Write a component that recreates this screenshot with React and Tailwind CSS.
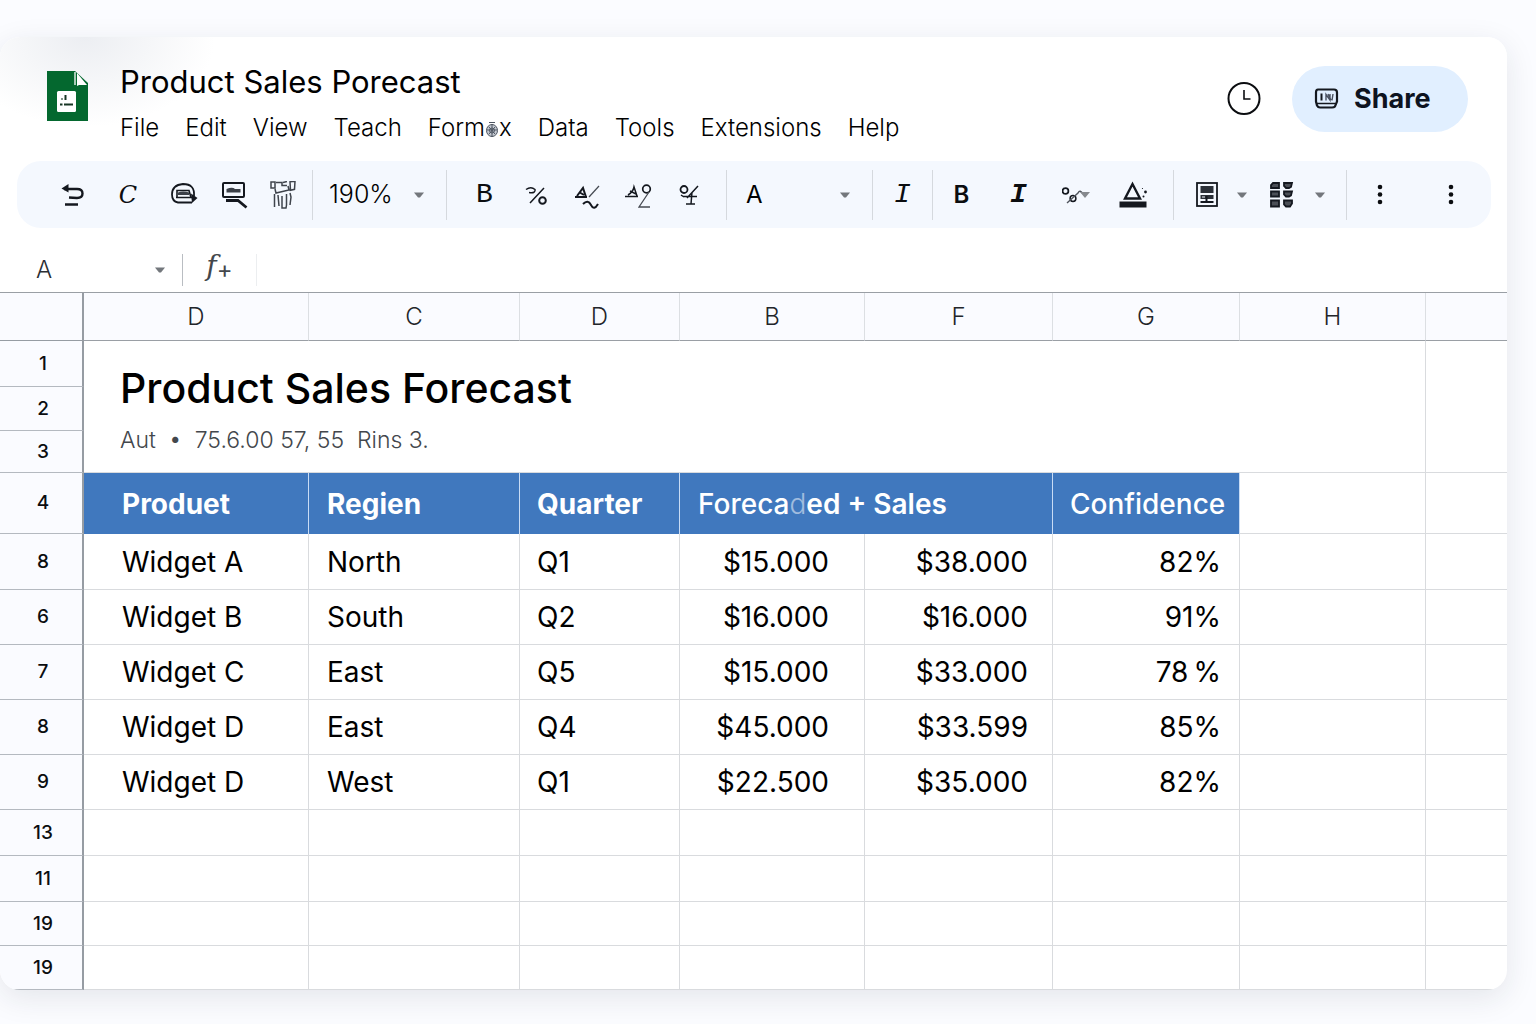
import { useState } from 'react';

const menuItems = ['File', 'Edit', 'View', 'Teach', 'Formex', 'Data', 'Tools', 'Extensions', 'Help'];

const columns = ['D', 'C', 'D', 'B', 'F', 'G', 'H'];

const forecastRows = [
  { no: '8', height: 'h-14', product: 'Widget A', region: 'North', quarter: 'Q1', forecast: '$15.000', sales: '$38.000', confidence: '82%' },
  { no: '6', height: 'h-[55px]', product: 'Widget B', region: 'South', quarter: 'Q2', forecast: '$16.000', sales: '$16.000', confidence: '91%' },
  { no: '7', height: 'h-[55px]', product: 'Widget C', region: 'East', quarter: 'Q5', forecast: '$15.000', sales: '$33.000', confidence: '78\u2009%' },
  { no: '8', height: 'h-[55px]', product: 'Widget D', region: 'East', quarter: 'Q4', forecast: '$45.000', sales: '$33.599', confidence: '85%' },
  { no: '9', height: 'h-[55px]', product: 'Widget D', region: 'West', quarter: 'Q1', forecast: '$22.500', sales: '$35.000', confidence: '82%' },
];

const emptyRows = [
  { no: '13', height: 'h-[46px]' },
  { no: '11', height: 'h-[46px]' },
  { no: '19', height: 'h-11' },
  { no: '19', height: 'h-11' },
];

function Icon({ children }) {
  return (
    <svg
      width="28"
      height="28"
      viewBox="0 0 28 28"
      fill="none"
      stroke="#14181f"
      strokeWidth="2"
      className="shrink-0"
      aria-hidden="true"
    >
      {children}
    </svg>
  );
}

function Caret({ className = '' }) {
  return (
    <svg width="12" height="6" viewBox="0 0 12 6" className={className} aria-hidden="true">
      <path d="M1 0.5h10L7 5.5H5z" fill="#73777c" />
    </svg>
  );
}

function Divider() {
  return <div className="h-[50px] w-px shrink-0 bg-[#d5d9de]" />;
}

function ToolButton({ label, width, children }) {
  return (
    <button
      type="button"
      aria-label={label}
      className={`flex h-12 shrink-0 items-center justify-center text-[#0b0d10] ${width}`}
    >
      {children}
    </button>
  );
}

function ToolSelect({ label, value, width, padding, caret }) {
  return (
    <div className={`relative flex shrink-0 items-center ${width}`}>
      <select
        aria-label={label}
        defaultValue={value}
        className={`w-full appearance-none bg-transparent outline-none ${padding}`}
      >
        <option>{value}</option>
      </select>
      <Caret className={`pointer-events-none absolute ${caret}`} />
    </div>
  );
}

function Logo() {
  return (
    <svg width="42" height="50" viewBox="0 0 42 50" className="shrink-0" aria-hidden="true">
      <path d="M0 0h28l13 12v38H0z" fill="#04682f" />
      <path d="M30 2l10 12h-8l-2 1z" fill="#fff" />
      <path d="M28 1v13" stroke="#fff" strokeWidth="1.3" />
      <rect x="10" y="20" width="19" height="21" rx="1.5" fill="#fff" />
      <path d="M18.500 24v5M17 33.500h9M13 33.500h2.500" stroke="#173524" strokeWidth="2" />
      <circle cx="15" cy="28" r="1" fill="#56705f" />
    </svg>
  );
}

function Smudge() {
  return (
    <svg width="14" height="18" viewBox="0 0 14 18" className="inline-block align-[-3px]" aria-hidden="true">
      <g fill="none" stroke="#4d5561" strokeWidth="1">
        <ellipse cx="7" cy="9.500" rx="5.500" ry="6" fill="#c5cad2" />
        <path d="M4 1.500h6M7 3v13M2 9h10M4 6l6 7M10 6l-6 7" />
        <circle cx="7" cy="9.500" r="2.500" />
      </g>
    </svg>
  );
}

function Header() {
  return (
    <header className="flex items-start bg-[radial-gradient(ellipse_130px_90px_at_85px_0px,#eceef2,#ffffff)] pt-6 pr-[39px] pl-[47px]">
      <div className="pt-2.5">
        <Logo />
      </div>
      <div className="ml-[31px]">
        <h1 className="pt-px text-[31px] leading-10 text-black">Product Sales Porecast</h1>
        <nav className="mt-2 flex gap-[26px] text-2xl leading-9 font-light text-black">
          {menuItems.map((item) => (
            <button key={item} type="button" className="whitespace-nowrap" aria-label={item}>
              {item === 'Formex' ? (
                <>
                  Form
                  <Smudge />x
                </>
              ) : (
                item
              )}
            </button>
          ))}
        </nav>
      </div>
      <div className="ml-auto flex items-center gap-[30px] pt-[5px]">
        <button type="button" aria-label="Version history">
          <svg width="36" height="36" viewBox="0 0 36 36" fill="none" stroke="#0b0d10" strokeWidth="2" aria-hidden="true">
            <circle cx="18" cy="17.500" r="15.500" />
            <path d="M18 9v9h6.500" strokeWidth="1.600" />
          </svg>
        </button>
        <button
          type="button"
          className="flex h-[66px] w-44 items-center gap-3.5 rounded-full bg-[#e1efff] pl-5 text-[27px] font-bold text-[#0d1320]"
        >
          <Icon>
            <path d="M6 4.500h16q3 0 3 3v9l-2 5q-1 1-3 1H8q-2 0-3-2l-1-4v-9q0-3 2-3z" strokeWidth="2.200" />
            <path d="M5 18.500h18" strokeWidth="1.600" />
            <path d="M9.500 8.500v7" />
            <path d="M14 15.500v-6l4 5.500v-6M21 9l-1 6.500M16 9l3 6" strokeWidth="1.400" stroke="#4a5160" />
          </Icon>
          Share
        </button>
      </div>
    </header>
  );
}

function Toolbar() {
  return (
    <div className="mr-4 ml-[17px] flex h-[67px] items-center rounded-3xl bg-[#f4f8fe] pl-[27px]">
      <ToolButton label="Undo" width="w-14">
        <Icon>
          <path d="M6 8h13q5.500 0 5.500 4.500T19 17l-8-.5" strokeWidth="2.400" />
          <path d="M3.500 7.500l7-4.500v8.500z" fill="#14181f" stroke="none" />
          <path d="M7 23.500h13" strokeWidth="2.400" />
        </Icon>
      </ToolButton>
      <ToolButton label="Redo" width="w-14">
        <span className="font-['DejaVu_Serif',serif] text-2xl italic">C</span>
      </ToolButton>
      <ToolButton label="Print" width="w-14">
        <Icon>
          <path d="M24 15q1-12-11-12Q2 4 2 13.500q0 7 6 8h14" strokeWidth="1.800" />
          <path d="M7 16.500V9.500h12l2 7M6 16.500h17" strokeWidth="1.600" />
          <path d="M8 11.500q5-2 11 0v2.500H8z" fill="#3b4048" stroke="none" />
          <path d="M21 12.500l6.500 4.500L22 22z" fill="#14181f" stroke="none" />
        </Icon>
      </ToolButton>
      <ToolButton label="Find" width="w-[46px]">
        <Icon>
          <rect x="2" y="2" width="21" height="14" rx="1" />
          <path d="M5.500 8q6-2.500 8.500 0h5.500v3.500h-14z" fill="#3b4048" stroke="none" />
          <path d="M5 19.500h12l8.500 7" strokeWidth="2.800" />
        </Icon>
      </ToolButton>
      <ToolButton label="Paint format" width="w-[50px]">
        <Icon>
          <g stroke="#3f444c" strokeWidth="1.500">
            <path d="M2 1h4v6H2zM7 1.500h6v3h5M6 8l1 4 13-3-1-4M21 0.800l5-.5-.5 8-4 1zM14 1.500l4-1" />
            <path d="M5.500 13v13M9 14l1 11M13 15v12h4l.5-3V13M21 12l1 4-1 8" />
          </g>
        </Icon>
      </ToolButton>
      <div className="ml-1">
        <Divider />
      </div>
      <ToolSelect label="Zoom" value="190%" width="w-[133px]" padding="pl-4 text-[25px] font-light text-black" caret="right-[21px]" />
      <Divider />
      <div className="flex px-3">
        <ToolButton label="Currency format" width="w-[51px]">
          <span className="font-['Liberation_Mono',monospace] text-[28px]">B</span>
        </ToolButton>
        <ToolButton label="Percent format" width="w-[51px]">
          <Icon>
            <path d="M4 8.500q5-3.500 9 0 1 4-6 3M22 7L8 22" strokeWidth="1.500" />
            <circle cx="20.500" cy="19.500" r="3.300" strokeWidth="2" />
          </Icon>
        </ToolButton>
        <ToolButton label="Decrease decimals" width="w-[51px]">
          <Icon>
            <path d="M2 16h12M4 15l6-8 3 9M6 11l5 3" strokeWidth="2" />
            <path d="M26 5L16 16" strokeWidth="1.200" stroke="#454a52" />
            <path d="M10 23q5-5 8 1 3 6 7-1" strokeWidth="2" />
          </Icon>
        </ToolButton>
        <ToolButton label="Increase decimals" width="w-[51px]">
          <Icon>
            <path d="M1 15.500h13M4 14q5-3 6-8l3 9M6 10l6 3" strokeWidth="1.500" />
            <circle cx="22.500" cy="8" r="3.800" strokeWidth="1.700" />
            <path d="M25 11l-10 15h11" strokeWidth="1.300" stroke="#454a52" />
          </Icon>
        </ToolButton>
        <ToolButton label="More formats" width="w-[51px]">
          <Icon>
            <circle cx="9" cy="8.500" r="3.500" strokeWidth="1.800" />
            <path d="M23 5L12 17M8 15.500h14M17 11l-1 12M11 23h9M6 14l3 2" strokeWidth="1.500" />
          </Icon>
        </ToolButton>
      </div>
      <Divider />
      <ToolSelect label="Font" value="A" width="w-[145px]" padding="pl-[19px] text-2xl text-black" caret="right-[21px]" />
      <Divider />
      <ToolButton label="Italic style" width="w-[59px]">
        <span className="font-['Liberation_Mono',monospace] text-[28px] italic">I</span>
      </ToolButton>
      <Divider />
      <ToolButton label="Bold" width="w-[57px]">
        <span className="text-2xl font-semibold">B</span>
      </ToolButton>
      <ToolButton label="Italic" width="w-[57px]">
        <span className="font-['Liberation_Mono',monospace] text-[28px] font-bold italic">I</span>
      </ToolButton>
      <ToolButton label="Strikethrough" width="w-[57px]">
        <Icon>
          <circle cx="3.500" cy="10" r="2.900" strokeWidth="1.700" />
          <circle cx="11" cy="17.500" r="2.900" strokeWidth="1.500" />
          <path d="M5 22L16 12q2-4 5 1" strokeWidth="1.400" stroke="#50555d" />
          <path d="M18 11h10l-5 6z" fill="#85898e" stroke="none" />
        </Icon>
      </ToolButton>
      <ToolButton label="Text color" width="w-[57px]">
        <Icon>
          <path d="M6 17.500L13.500 3 21 17.500z" strokeWidth="2.400" />
          <path d="M0.500 23.500h27" strokeWidth="6" />
          <circle cx="26.500" cy="11" r="1.400" fill="#14181f" stroke="none" />
          <circle cx="24.500" cy="15.500" r="1" fill="#14181f" stroke="none" />
          <circle cx="23.500" cy="7.500" r="0.600" fill="#14181f" stroke="none" />
        </Icon>
      </ToolButton>
      <div className="ml-3">
        <Divider />
      </div>
      <div className="flex pr-4 pl-2">
        <ToolButton label="Borders" width="w-[50px]">
          <Icon>
            <rect x="4" y="2" width="20" height="23" strokeWidth="1.800" />
            <path d="M7.500 5h13v7h-13zM7.500 14h13v4h-13z" fill="#2b3038" stroke="none" />
            <path d="M7.500 21h13M13.500 15v6" strokeWidth="2" />
            <path d="M9 16h3" stroke="#8b9099" />
          </Icon>
        </ToolButton>
        <ToolButton label="Border options" width="w-5">
          <Caret />
        </ToolButton>
        <ToolButton label="Merge cells" width="w-[58px]">
          <Icon>
            <g fill="#4b4f56" strokeWidth="1.800">
              <path d="M6 2h6v5H4V4zM17 2h8l-1 4-2 1h-3l-2-2zM4 10.500h8v5H4zM17 10.500h8l-1 4-2 1h-3l-2-2zM4 19.500h8v6H4zM17 19.500h8v3l-2 3h-4l-2-2z" />
            </g>
          </Icon>
        </ToolButton>
        <ToolButton label="Merge options" width="w-5">
          <Caret />
        </ToolButton>
      </div>
      <Divider />
      <ToolButton label="More" width="w-[66px]">
        <Dots />
      </ToolButton>
      <div className="mr-5 ml-auto">
        <ToolButton label="Toolbar options" width="w-10">
          <Dots />
        </ToolButton>
      </div>
    </div>
  );
}

function Dots() {
  return (
    <svg width="6" height="22" viewBox="0 0 6 22" fill="#0b0d10" aria-hidden="true">
      <circle cx="3" cy="3" r="2.300" />
      <circle cx="3" cy="10.500" r="2.300" />
      <circle cx="3" cy="18" r="2.300" />
    </svg>
  );
}

function FormulaBar() {
  const [formula, setFormula] = useState('');

  return (
    <div className="flex h-16 items-end">
      <div className="flex h-11 w-full items-center text-[#43474c]">
        <ToolSelect label="Name box" value="A" width="w-[182px]" padding="pl-9 text-2xl font-light text-[#2b2e33]" caret="right-4" />
        <div className="h-8 w-px bg-[#b9bdc2]" />
        <button type="button" aria-label="Insert function" className="flex h-10 w-[73px] items-center justify-center">
          <span className="pb-2 font-['DejaVu_Serif',serif] text-[28px] leading-8 italic">f</span>
          <span className="text-2xl leading-8">+</span>
        </button>
        <div className="h-8 w-px bg-[#eceef0]" />
        <input
          aria-label="Formula"
          value={formula}
          onChange={(e) => setFormula(e.target.value)}
          className="h-8 min-w-0 flex-1 bg-transparent px-3 text-xl outline-none"
        />
      </div>
    </div>
  );
}

function RowNumber({ children, height = '' }) {
  return (
    <th
      scope="row"
      className={`border-r-2 border-b border-r-[#969ca3] border-b-[#b4b9c0] bg-[#fafbff] py-0 pr-0 pl-1 text-center text-[19px] font-medium text-[#0b0d10] ${height}`}
    >
      {children}
    </th>
  );
}

function Sheet() {
  const cell = 'border-r border-b border-[#d9dbde] p-0';
  const head = 'border-r border-[#c9dcf5] bg-[#4078be] p-0 text-left';

  return (
    <table className="w-full table-fixed border-separate border-spacing-0 border-t border-[#9a9fa5] text-[28px] leading-9 text-black">
      <colgroup>
        <col className="w-[84px]" />
        <col className="w-[225px]" />
        <col className="w-[211px]" />
        <col className="w-40" />
        <col className="w-[185px]" />
        <col className="w-[188px]" />
        <col className="w-[187px]" />
        <col className="w-[186px]" />
        <col />
      </colgroup>
      <thead>
        <tr className="h-12 bg-[#fafbff] text-2xl text-[#22252a]">
          <td className="border-r-2 border-b border-[#969ca3] p-0" />
          {columns.map((name, index) => (
            <th key={index} scope="col" className="border-r border-b border-r-[#dcdfe3] border-b-[#9a9fa5] p-0 font-light">
              {name}
            </th>
          ))}
          <td className="border-b border-[#9a9fa5] p-0" />
        </tr>
      </thead>
      <tbody>
        <tr>
          <RowNumber height="h-[46px]">1</RowNumber>
          <td colSpan={7} rowSpan={3} className="border-r border-b border-[#d9dbde] p-0 pl-9">
            <h2 className="pt-1 text-[41px] leading-[52px] font-medium">Product Sales Forecast</h2>
            <p className="mt-2.5 text-[23px] leading-8 font-light whitespace-pre text-[#43474c]">
              Aut{'  '}•{'  '}75.6.00 57, 55{'  '}Rins 3.
            </p>
          </td>
          <td rowSpan={3} className="border-b border-[#d9dbde] p-0" />
        </tr>
        <tr>
          <RowNumber height="h-11">2</RowNumber>
        </tr>
        <tr>
          <RowNumber height="h-[42px]">3</RowNumber>
        </tr>
        <tr>
          <RowNumber height="h-[61px]">4</RowNumber>
          <th scope="col" className={`${head} pl-[38px] font-bold text-white`}>Produet</th>
          <th scope="col" className={`${head} pl-[18px] font-bold text-white`}>Regien</th>
          <th scope="col" className={`${head} pl-[17px] font-bold text-white`}>Quarter</th>
          <th scope="col" colSpan={2} className={`${head} pl-[18px] font-semibold whitespace-nowrap text-white`}>
            <span className="font-medium">Foreca</span>
            <span className="font-light opacity-50">d</span>
            ed + Sales
          </th>
          <th scope="col" className={`${head} pl-[17px] font-medium text-white`}>Confidence</th>
          <td className={cell} />
          <td className="border-b border-[#d9dbde] p-0" />
        </tr>
        {forecastRows.map((row, index) => (
          <tr key={index}>
            <RowNumber height={row.height}>{row.no}</RowNumber>
            <td className={`${cell} pl-[38px]`}>{row.product}</td>
            <td className={`${cell} pl-[18px]`}>{row.region}</td>
            <td className={`${cell} pl-[17px]`}>{row.quarter}</td>
            <td className={`${cell} pr-[35px] text-right`}>{row.forecast}</td>
            <td className={`${cell} pr-6 text-right`}>{row.sales}</td>
            <td className={`${cell} pr-[18px] text-right`}>{row.confidence}</td>
            <td className={cell} />
            <td className="border-b border-[#d9dbde] p-0" />
          </tr>
        ))}
        {emptyRows.map((row, index) => (
          <tr key={index}>
            <RowNumber height={row.height}>{row.no}</RowNumber>
            {columns.map((_, i) => (
              <td key={i} className={cell} />
            ))}
            <td className="border-b border-[#d9dbde] p-0" />
          </tr>
        ))}
      </tbody>
    </table>
  );
}

export default function App() {
  return (
    <div className="min-h-screen bg-[#fbfcff] pt-[37px] pr-[29px] pb-[34px] font-['Inter',sans-serif]">
      <main className="overflow-hidden rounded-[20px] bg-white shadow-[0_8px_30px_rgba(30,35,60,0.10)]">
        <Header />
        <div className="pt-[15px]">
          <Toolbar />
        </div>
        <FormulaBar />
        <Sheet />
      </main>
    </div>
  );
}
